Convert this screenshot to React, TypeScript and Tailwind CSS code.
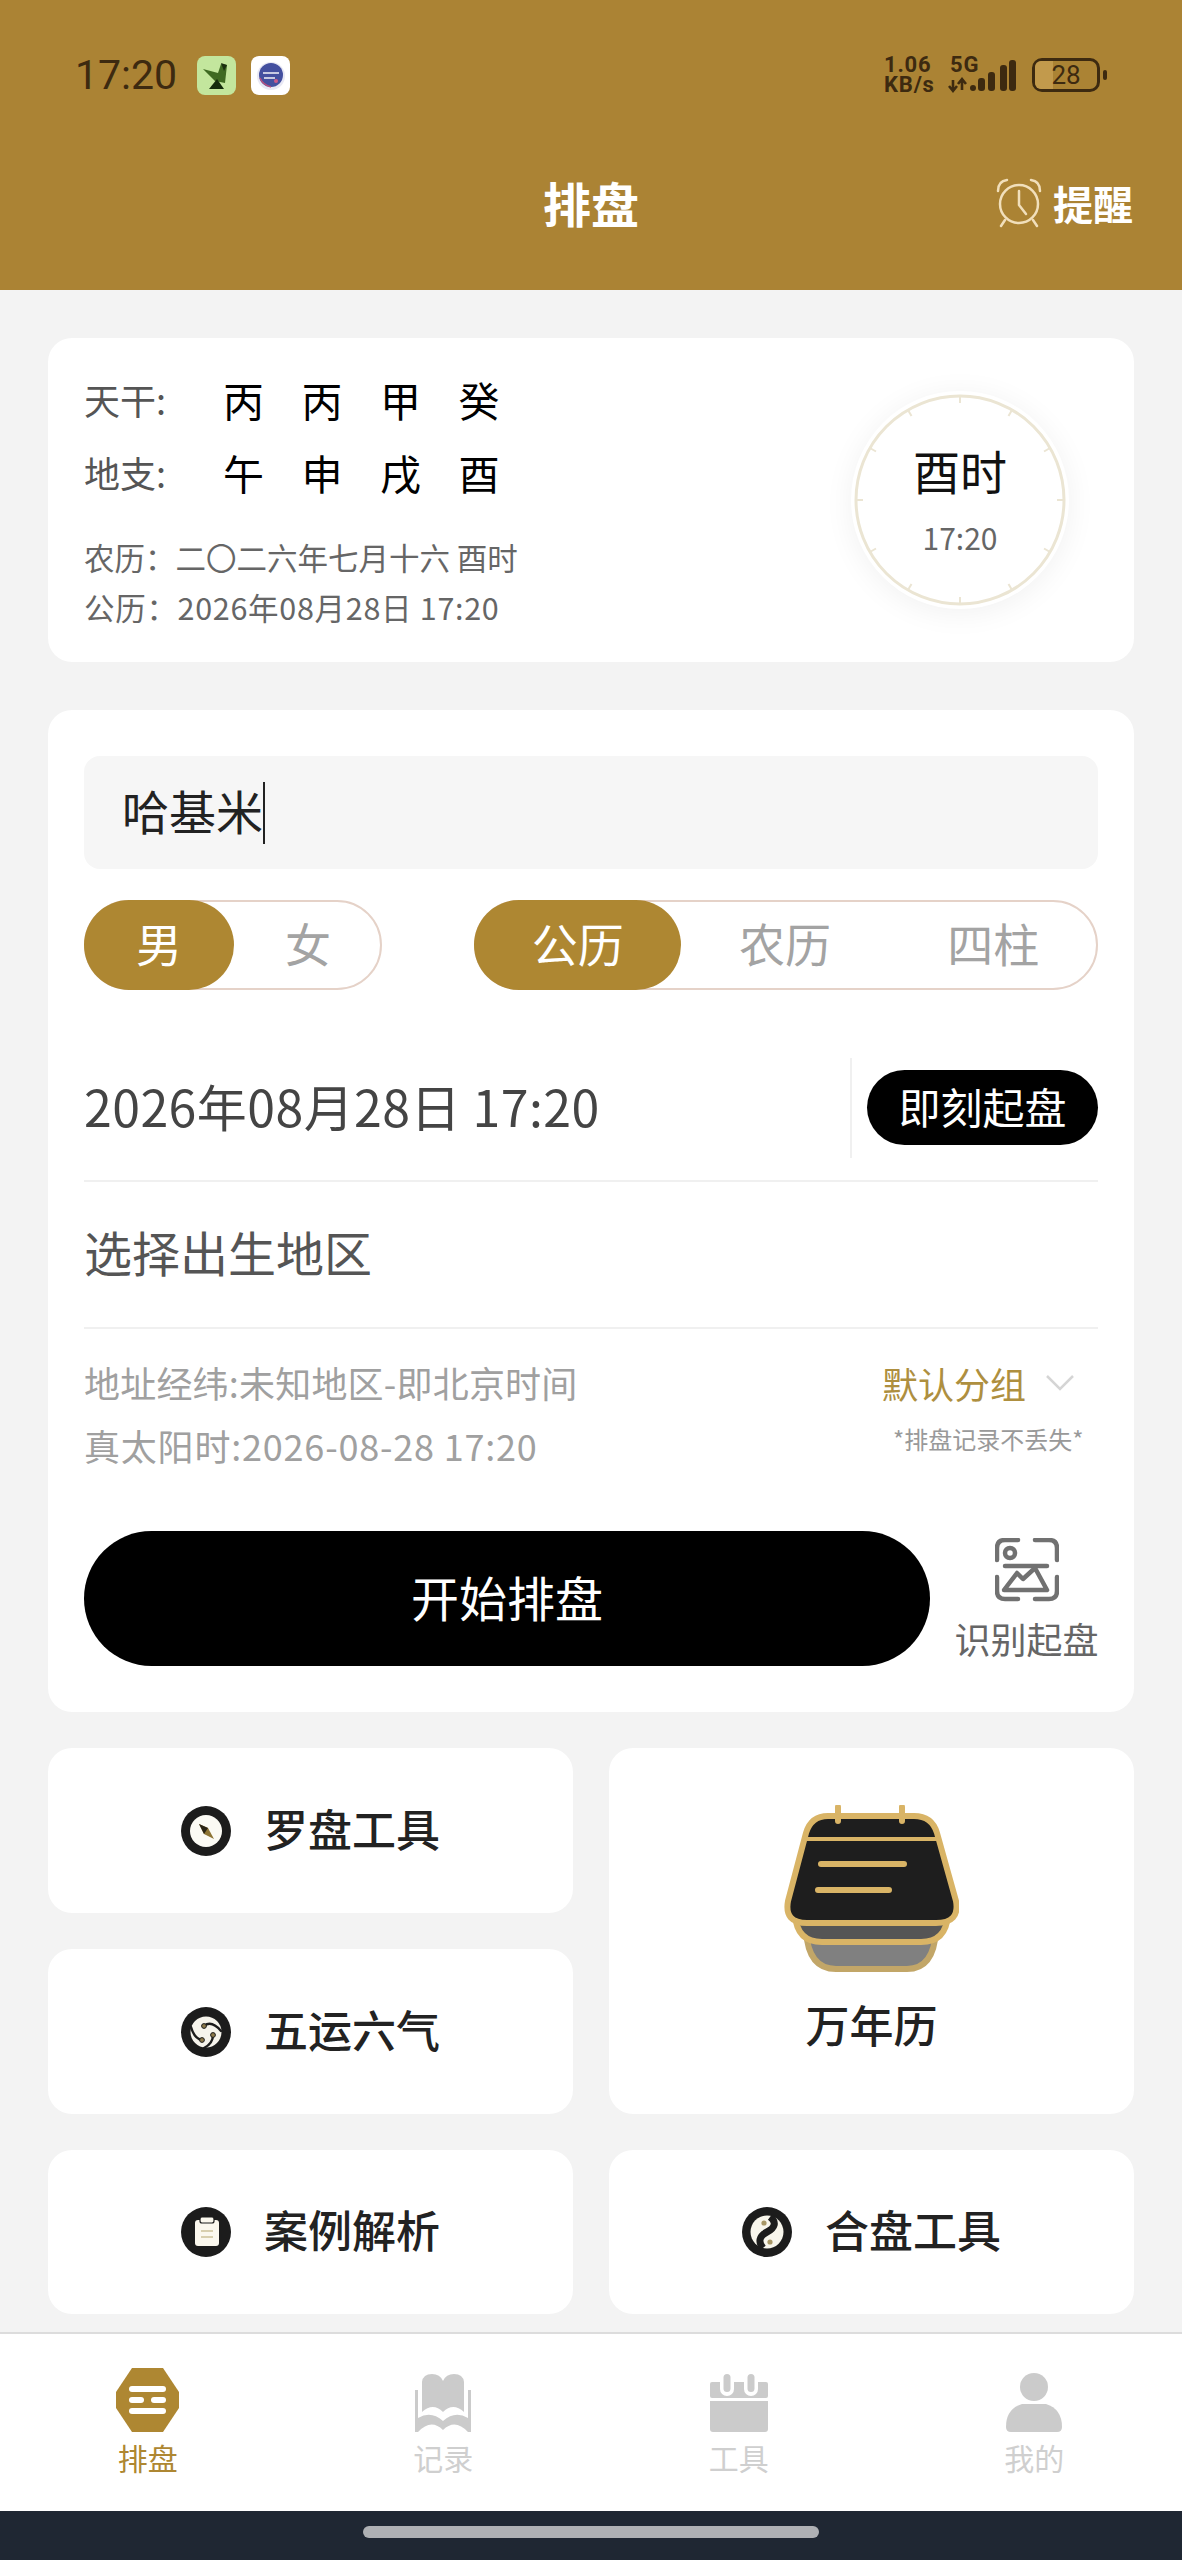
import React from "react";

const CJK = { fontFamily: '"Noto Sans CJK SC", "Noto Sans", sans-serif' };

const stems = ["丙", "丙", "甲", "癸"];
const branches = ["午", "申", "戌", "酉"];

const PillarRow = ({ label, chars }: { label: string; chars: string[] }) => (
  <div className="flex items-center h-[73px] pb-[7px]">
    <span className="w-[139px] text-[36px] leading-none text-[#555]">{label}</span>
    <div className="flex gap-[37.5px]">
      {chars.map((c, i) => (
        <span key={i} className="w-[41px] text-[41px] leading-none text-black">
          {c}
        </span>
      ))}
    </div>
  </div>
);

const ClockFace = () => {
  const ticks = Array.from({ length: 12 }, (_, i) => i * 30);
  return (
    <svg viewBox="0 0 218 218" className="absolute inset-0 w-[218px] h-[218px]">
      <circle cx="109" cy="109" r="104" fill="none" stroke="#ebe5d3" strokeWidth="3" />
      {ticks.map((deg) => (
        <line key={deg} x1="109" y1="5" x2="109" y2="12" stroke="#ebe5d3" strokeWidth="2" transform={`rotate(${deg} 109 109)`} />
      ))}
    </svg>
  );
};

const CompassIcon = () => (
  <svg viewBox="0 0 50 50" className="w-[50px] h-[50px] shrink-0">
    <circle cx="25" cy="25" r="25" fill="#1c1c1c" />
    <circle cx="25" cy="25" r="16" fill="#fbfaf4" />
    <path d="M18 18 L27 22 L33 33 L23 28 Z" fill="#8d7434" />
    <path d="M18 18 L27 22 L23 28 Z" fill="#2a2415" />
  </svg>
);

const SwirlIcon = () => (
  <svg viewBox="0 0 50 50" className="w-[50px] h-[50px] shrink-0">
    <circle cx="25" cy="25" r="25" fill="#1c1c1c" />
    <circle cx="25" cy="25" r="15.5" fill="#f6f4ec" />
    <g fill="none" stroke="#1c1c1c" strokeWidth="2.4" strokeLinecap="round">
      <path d="M23 19 C28 15 34 17 40 24" />
      <path d="M32 28 C32 34 29 38 23 41" />
      <path d="M21 33 C15 32 12 27 10 20" />
    </g>
    <circle cx="23" cy="19" r="2.4" fill="#8d7a4a" stroke="#1c1c1c" strokeWidth="1" />
    <circle cx="32" cy="28" r="2.4" fill="#8d7a4a" stroke="#1c1c1c" strokeWidth="1" />
    <circle cx="21" cy="33" r="2.4" fill="#8d7a4a" stroke="#1c1c1c" strokeWidth="1" />
  </svg>
);

const ClipboardIcon = () => (
  <svg viewBox="0 0 50 50" className="w-[50px] h-[50px] shrink-0">
    <circle cx="25" cy="25" r="25" fill="#1c1c1c" />
    <rect x="14" y="13" width="24" height="26" rx="3" fill="#fbf8ee" />
    <rect x="19" y="10" width="14" height="6" rx="2" fill="#fbf8ee" stroke="#1c1c1c" strokeWidth="1.2" />
    <rect x="20" y="23" width="12" height="2" fill="#d8cfae" />
    <rect x="20" y="29" width="12" height="2" fill="#d8cfae" />
  </svg>
);

const YinYangIcon = () => (
  <svg viewBox="0 0 50 50" className="w-[50px] h-[50px] shrink-0">
    <circle cx="25" cy="25" r="25" fill="#1c1c1c" />
    <circle cx="25" cy="25" r="16.5" fill="#f8f6ec" />
    <path d="M28 10 C35 15 33 21 25 25 C17 29 16 35 21 41" fill="none" stroke="#1c1c1c" strokeWidth="7" />
    <circle cx="22" cy="16" r="2.6" fill="#a89766" />
    <circle cx="28" cy="35" r="2.6" fill="#a89766" />
  </svg>
);

const ScanIcon = () => (
  <svg viewBox="0 0 64 64" className="w-[64px] h-[64px]" fill="none" stroke="#717171" strokeWidth="4.5" strokeLinecap="round" strokeLinejoin="round">
    <path d="M23 2 H10 Q2 2 2 10 V22" />
    <path d="M40 2 H54 Q62 2 62 10 V22" />
    <path d="M2 39 V53 Q2 61 10 61 H23" />
    <path d="M40 61 H54 Q62 61 62 53 V39" />
    <circle cx="15" cy="15" r="5" />
    <path d="M10 28 H52" />
    <path d="M9 52 L22 35 L28 41 L40 30 L52 52 Z" />
  </svg>
);

const BigCalendarIcon = () => (
  <svg viewBox="0 0 175 167" className="w-[175px] h-[167px]">
    <path d="M22 125 Q24 164 52 164 H123 Q150 164 152 125 Z" fill="#808080" stroke="#c2a668" strokeWidth="6" strokeLinejoin="round" />
    <path d="M11 110 Q13 137 38 137 H137 Q162 137 164 110 Z" fill="#555" stroke="#d9b466" strokeWidth="6" strokeLinejoin="round" />
    <path d="M44 11 H130 Q148 11 153 28 L172 96 Q176 118 152 118 H23 Q0 118 4 96 L22 28 Q27 11 44 11 Z" fill="#1e1e1e" stroke="#d9b466" strokeWidth="6" strokeLinejoin="round" />
    <path d="M19 34 H156" stroke="#d9b466" strokeWidth="4" />
    <path d="M54 2 V16 M118 2 V16" stroke="#d9b466" strokeWidth="6" strokeLinecap="round" />
    <path d="M37 59 H120 M34 85 H105" stroke="#d9b466" strokeWidth="6" strokeLinecap="round" />
  </svg>
);

const AlarmIcon = () => (
  <svg viewBox="0 0 48 50" className="w-[48px] h-[50px]" fill="none" stroke="#f1dfbb" strokeWidth="2.5" strokeLinecap="round" strokeLinejoin="round">
    <circle cx="24" cy="26" r="19" />
    <path d="M24 13 V27 L31 36" />
    <path d="M3 13 Q3 3 12 2" />
    <path d="M45 13 Q45 3 36 2" />
    <path d="M10 42 L6 48 M38 42 L42 48" />
  </svg>
);

const BirdIcon = () => (
  <svg viewBox="0 0 39 39" className="w-[39px] h-[39px] rounded-[8px] bg-[#c3e69d]">
    <path d="M6 13 L21 17 L24 8 L30 9 L28 27 L18 25 Z" fill="#3f6a22" />
    <path d="M24 7 L30 9 L27 15 Z" fill="#1b2f10" />
    <path d="M12 33 L20 23 L27 33 Z" fill="#142a0c" />
  </svg>
);

const BlueAppIcon = () => (
  <svg viewBox="0 0 39 39" className="w-[39px] h-[39px] rounded-[8px] bg-white">
    <circle cx="20" cy="20" r="14" fill="#e8e8f4" />
    <circle cx="20" cy="19" r="12" fill="#44509f" />
    <path d="M12 17 H28 M13 22 H24" stroke="#f2f2f8" strokeWidth="1.6" />
    <path d="M9 22 Q12 29 20 31" stroke="#b8507f" strokeWidth="1.5" fill="none" />
    <circle cx="25" cy="25" r="2" fill="#cc5a8a" />
  </svg>
);

const StatusSignal = () => (
  <svg viewBox="0 0 80 38" className="w-[80px] h-[38px]">
    <path d="M5 24 V34 M1 30 L5 35 L9 30 M14 34 V24 M10 28 L14 23 L18 28" stroke="#3d2a10" strokeWidth="2.6" fill="none" />
    <circle cx="25" cy="32" r="3" fill="#3d2a10" />
    {[
      { x: 30, y: 22 },
      { x: 40, y: 16 },
      { x: 52, y: 9 },
      { x: 61, y: 4 },
    ].map((b) => (
      <rect key={b.x} x={b.x} y={b.y} width="7" height={35 - b.y} rx="3" fill="#3d2a10" />
    ))}
  </svg>
);

const Hexagon = () => (
  <svg viewBox="0 0 63 64" className="w-[63px] h-[64px]">
    <path d="M16 0 H47 L63 24 V40 L47 64 H16 L0 40 V24 Z" fill="#ae8732" />
    <rect x="13" y="18" width="37" height="6" rx="3" fill="#fff" />
    <rect x="13" y="29" width="15" height="6" rx="3" fill="#fff" />
    <rect x="35" y="29" width="15" height="6" rx="3" fill="#fff" />
    <rect x="13" y="40" width="37" height="6" rx="3" fill="#fff" />
  </svg>
);

const BookIcon = () => (
  <svg viewBox="0 0 56 58" className="w-[56px] h-[58px]" fill="#cbcbcb">
    <path d="M7 8 Q8 0 17 0 Q25 0 28 7 Q31 0 39 0 Q48 0 49 8 V38 Q38 28 28 38 Q18 28 7 38 Z" />
    <path d="M0 16 H3 V44 Q16 36 28 47 Q40 36 53 44 V16 H56 V58 H53 Q40 44 28 56 Q16 44 3 58 H0 Z" />
  </svg>
);

const CalendarTabIcon = () => (
  <svg viewBox="0 0 58 58" className="w-[58px] h-[58px]">
    <rect x="0" y="8" width="58" height="16" rx="2" fill="#cbcbcb" />
    <rect x="10" y="0" width="14" height="22" rx="7" fill="#fff" />
    <rect x="34" y="0" width="14" height="22" rx="7" fill="#fff" />
    <rect x="13.5" y="0" width="7" height="18" rx="3.5" fill="#cbcbcb" />
    <rect x="37.5" y="0" width="7" height="18" rx="3.5" fill="#cbcbcb" />
    <path d="M0 27 H58 V55 Q58 58 55 58 H3 Q0 58 0 55 Z" fill="#cbcbcb" />
  </svg>
);

const PersonIcon = () => (
  <svg viewBox="0 0 56 59" className="w-[56px] h-[59px]" fill="#cbcbcb">
    <ellipse cx="28" cy="14" rx="14" ry="14" />
    <path d="M16 31 H40 Q56 36 56 54 Q56 59 51 59 H5 Q0 59 0 54 Q0 36 16 31 Z" />
  </svg>
);

const tabs = [
  { label: "排盘", icon: <Hexagon />, active: true },
  { label: "记录", icon: <BookIcon />, active: false },
  { label: "工具", icon: <CalendarTabIcon />, active: false },
  { label: "我的", icon: <PersonIcon />, active: false },
];

const ToolCard = ({ icon, label }: { icon: React.ReactNode; label: string }) => (
  <div className="bg-white rounded-[24px] flex items-center gap-[33px] pl-[133px]">
    {icon}
    <span className="text-[44px] leading-none font-medium text-[#222] pb-[6px]">{label}</span>
  </div>
);

export default function App() {
  return (
    <div style={CJK} className="w-[1182px] h-[2560px] flex flex-col bg-[#f3f3f3] overflow-hidden">
      <header className="bg-[#ab8334] h-[290px] shrink-0 px-[75px]">
        <div className="flex items-center justify-between h-[150px]">
          <div className="flex items-center">
            <span className="text-[41px] leading-none text-[#3d2a10] w-[122px]" style={{ fontFamily: "Roboto, sans-serif" }}>
              17:20
            </span>
            <div className="flex gap-[15px]">
              <BirdIcon />
              <BlueAppIcon />
            </div>
          </div>
          <div className="flex items-center text-[#3d2a10] font-bold" style={{ fontFamily: "Roboto, sans-serif" }}>
            <div className="flex flex-col w-[64px] text-[22px] leading-[20px] tracking-[0.8px]">
              <span>1.06</span>
              <span>KB/s</span>
            </div>
            <div className="relative w-[80px] h-[38px] mr-[4px]">
              <span className="absolute left-[2px] top-[-2px] text-[22px] leading-none tracking-[0.8px]">5G</span>
              <StatusSignal />
            </div>
            <div className="relative w-[68px] h-[34px] rounded-[10px] border-[3px] border-[#3d2a10] flex items-center justify-center">
              <span className="absolute left-0 top-0 bottom-0 w-[18px] bg-[#c29a4c] rounded-l-[6px]" />
              <span className="relative text-[26px] leading-none font-normal">28</span>
            </div>
            <span className="w-[4px] h-[10px] ml-[3px] bg-[#3d2a10] rounded-full" />
          </div>
        </div>
        <div className="relative flex items-center justify-center h-[54px] mt-[25px]">
          <span className="text-[48px] leading-none font-bold text-white">排盘</span>
          <div className="absolute right-[-26px] top-[3px] flex items-center gap-[10px]">
            <AlarmIcon />
            <span className="text-[40px] leading-none font-bold text-white">提醒</span>
          </div>
        </div>
      </header>

      <main className="flex-1 px-[48px] pt-[48px]">
        <section className="bg-white rounded-[24px] h-[324px] pl-[36px] pr-[65px] pt-[28px] flex justify-between">
          <div>
            <PillarRow label="天干:" chars={stems} />
            <PillarRow label="地支:" chars={branches} />
            <div className="mt-[20px] text-[30.5px] text-[#666]">
              <div className="h-[50px] leading-[50px]">农历：二〇二六年七月十六 酉时</div>
              <div className="h-[50px] leading-[50px] tracking-[0.7px]">公历：2026年08月28日 17:20</div>
            </div>
          </div>
          <div className="relative w-[218px] h-[218px] mt-[25px] rounded-full bg-white shadow-[0_4px_30px_rgba(0,0,0,0.06)] flex flex-col items-center">
            <ClockFace />
            <span className="mt-[55px] text-[47px] leading-none text-[#111]">酉时</span>
            <span className="mt-[29px] text-[30px] leading-none text-[#666]">17:20</span>
          </div>
        </section>

        <section className="bg-white rounded-[24px] mt-[48px] px-[36px] pt-[46px] pb-[46px]">
          <div className="h-[113px] rounded-[16px] bg-[#f6f6f6] flex items-center pl-[38px]">
            <span className="text-[47px] leading-none text-[#222] pb-[6px]">哈基米</span>
            <span className="w-[2px] h-[62px] bg-[#222]" />
          </div>

          <div className="mt-[31px] flex justify-between">
            <div className="w-[298px] h-[90px] rounded-full border-2 border-[#e5d2c8] flex items-center text-[46px] leading-none">
              <span className="w-[150px] h-[90px] -ml-[2px] pb-[6px] rounded-full bg-[#ae8732] text-white flex items-center justify-center">男</span>
              <span className="flex-1 text-center text-[#a3a3a3] pb-[6px] pl-[2px]">女</span>
            </div>
            <div className="w-[624px] h-[90px] rounded-full border-2 border-[#e5d2c8] flex items-center text-[46px] leading-none">
              <span className="w-[208px] h-[90px] -ml-[2px] pb-[6px] rounded-full bg-[#ae8732] text-white flex items-center justify-center">公历</span>
              <span className="w-[208px] text-center text-[#a3a3a3] pb-[6px]">农历</span>
              <span className="w-[208px] text-center text-[#a3a3a3] pb-[6px] pl-[2px]">四柱</span>
            </div>
          </div>

          <div className="mt-[45px] h-[147px] border-b-2 border-[#f0f0f0] flex items-center justify-between">
            <span className="text-[50px] leading-none text-[#444] tracking-[0.45px] pb-[6px]">2026年08月28日 17:20</span>
            <div className="flex items-center">
              <span className="w-[2px] h-[100px] bg-[#f0f0f0] mr-[15px]" />
              <span className="w-[231px] h-[75px] pb-[4px] rounded-full bg-black text-white text-[42px] leading-none flex items-center justify-center">即刻起盘</span>
            </div>
          </div>

          <div className="h-[147px] border-b-2 border-[#f0f0f0] flex items-center pb-[8px]">
            <span className="text-[48px] leading-none text-[#555]">选择出生地区</span>
          </div>

          <div className="mt-[22px] flex justify-between">
            <div className="text-[36px] text-[#a0a0a0]">
              <div className="h-[63px] leading-[63px] tracking-[0.2px]">地址经纬:未知地区-即北京时间</div>
              <div className="h-[63px] leading-[63px] tracking-[0.8px]">真太阳时:2026-08-28 17:20</div>
            </div>
            <div className="w-[216px] flex flex-col">
              <div className="h-[63px] flex items-center text-[36px] leading-none text-[#ae8f3f]">
                默认分组
                <svg viewBox="0 0 28 16" className="w-[28px] h-[16px] ml-[20px]" fill="none" stroke="#d5d5d5" strokeWidth="2.5">
                  <path d="M1 1 L14 14 L27 1" />
                </svg>
              </div>
              <div className="h-[49px] pl-[11px] whitespace-nowrap flex items-center text-[24px] leading-none text-[#999]">*排盘记录不丢失*</div>
            </div>
          </div>

          <div className="mt-[54px] flex justify-between">
            <button className="w-[846px] h-[135px] pb-[6px] rounded-full bg-black text-white text-[48px] leading-none">开始排盘</button>
            <div className="w-[143px] flex flex-col items-center pt-[7px]">
              <ScanIcon />
              <span className="mt-[18px] text-[36px] leading-none whitespace-nowrap text-[#666]">识别起盘</span>
            </div>
          </div>
        </section>

        <section className="mt-[36px] grid grid-cols-2 gap-x-[36px] gap-y-[36px] grid-rows-[165px_165px_164px]">
          <ToolCard icon={<CompassIcon />} label="罗盘工具" />
          <div className="row-span-2 bg-white rounded-[24px] flex flex-col items-center pt-[57px]">
            <BigCalendarIcon />
            <span className="mt-[30px] text-[44px] leading-none font-medium text-[#222]">万年历</span>
          </div>
          <ToolCard icon={<SwirlIcon />} label="五运六气" />
          <ToolCard icon={<ClipboardIcon />} label="案例解析" />
          <ToolCard icon={<YinYangIcon />} label="合盘工具" />
        </section>
      </main>

      <nav className="shrink-0 h-[179px] bg-white border-t-2 border-[#dcdcdc] grid grid-cols-4 pt-[32px]">
        {tabs.map((t) => (
          <div key={t.label} className="flex flex-col items-center">
            <div className="h-[66px] flex items-end">{t.icon}</div>
            <span className={`mt-[10px] text-[30px] leading-none ${t.active ? "text-[#ae8732]" : "text-[#cfcfcf]"}`}>{t.label}</span>
          </div>
        ))}
      </nav>
      <div className="shrink-0 h-[49px] bg-[#1f2733] flex justify-center pt-[15px]">
        <div className="w-[456px] h-[12px] rounded-full bg-[#aeb0b4]" />
      </div>
    </div>
  );
}
